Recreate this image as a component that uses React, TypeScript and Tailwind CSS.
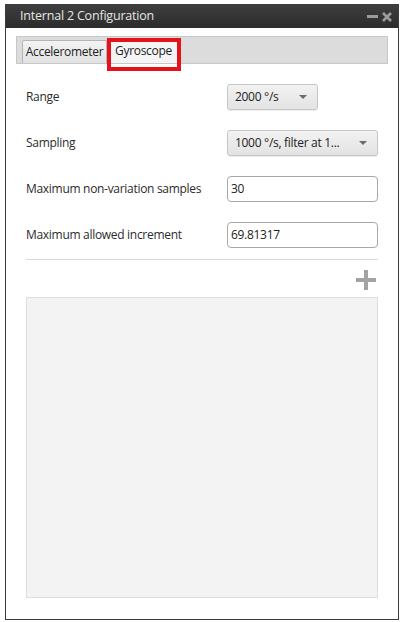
import React from "react";

const font = { fontFamily: '"Segoe UI", "Open Sans", "Noto Sans", sans-serif' };

function Dropdown({ text, width }: { text: string; width: string }) {
  return (
    <div
      className={`${width} h-[26px] flex items-center justify-between pl-[7px] pr-[10px] rounded-[3px] border border-[#c6c6c6] bg-gradient-to-b from-[#f2f2f2] to-[#e3e3e3] text-[12px] tracking-[-0.3px] text-[#222] shadow-[0_1px_1px_rgba(0,0,0,0.08)]`}
    >
      <span className="whitespace-nowrap">{text}</span>
      <svg width="8" height="5" viewBox="0 0 8 5">
        <path d="M0 0 L8 0 L4 4 Z" fill="#6b6b6b" />
      </svg>
    </div>
  );
}

function Input({ value }: { value: string }) {
  return (
    <div className="w-[151px] h-[26px] flex items-center pl-[3px] rounded-[4px] border border-[#a8a8a8] bg-white text-[12px] tracking-[-0.3px] text-[#222]">
      {value}
    </div>
  );
}

function Row({ label, children }: { label: string; children: React.ReactNode }) {
  return (
    <div className="flex items-center h-[26px]">
      <div className="w-[201px] text-[12px] tracking-[-0.3px] text-[#2b2b2b] whitespace-nowrap">{label}</div>
      {children}
    </div>
  );
}

export default function App() {
  return (
    <div className="w-[403px] h-[622px] bg-white pt-[4px] pl-[5px]" style={font}>
      <div className="w-[394px] h-[616px] border border-[#3a3a3a] flex flex-col bg-white">
        <div className="h-[23px] shrink-0 bg-gradient-to-b from-[#3e3e3e] to-[#2c2c2c] flex items-center justify-between pl-[14px] pr-[6px]">
          <span className="text-[12.5px] tracking-[-0.2px] text-[#e6e6e6]">Internal 2 Configuration</span>
          <div className="flex items-center gap-[4px]">
            <svg width="11" height="11" viewBox="0 0 11 11">
              <rect x="0" y="4" width="11" height="3" fill="#9c9c9c" />
            </svg>
            <svg width="10" height="10" viewBox="0 0 10 10">
              <path d="M1 1 L9 9 M9 1 L1 9" stroke="#9c9c9c" strokeWidth="2.6" />
            </svg>
          </div>
        </div>
        <div className="flex-1 flex flex-col px-[10px] pt-[8px] pb-[21px]">
          <div className="relative h-[28px] shrink-0 bg-[#dcdcdc] border border-[#c8c8c8] flex items-end pl-[5px]">
            <div className="h-[23px] w-[85px] flex items-center justify-center border border-b-0 border-[#b4b4b4] rounded-t-[2px] bg-gradient-to-b from-[#f3f3f3] to-[#e2e2e2] text-[12px] tracking-[-0.3px] text-[#222]">
              Accelerometer
            </div>
            <div className="h-[24px] w-[73px] flex items-center justify-center bg-[#f4f4f4] text-[12px] tracking-[-0.3px] text-[#222]">
              Gyroscope
            </div>
            <div className="absolute left-[90px] top-[1px] w-[74px] h-[33px] border-[4px] border-[#e5121b] pointer-events-none" />
          </div>
          <div className="flex flex-col gap-[20px] mt-[20px] px-[10px]">
            <Row label="Range">
              <Dropdown text="2000 °/s" width="w-[91px]" />
            </Row>
            <Row label="Sampling">
              <Dropdown text="1000 °/s, filter at 1..." width="w-[151px]" />
            </Row>
            <Row label="Maximum non-variation samples">
              <Input value="30" />
            </Row>
            <Row label="Maximum allowed increment">
              <Input value="69.81317" />
            </Row>
          </div>
          <div className="mx-[10px] mt-[11px] h-px bg-[#d9d9d9]" />
          <div className="mx-[10px] flex justify-end pr-[2px] mt-[10px]">
            <svg width="20" height="20" viewBox="0 0 20 20">
              <rect x="8" y="0" width="4" height="20" fill="#a3a3a3" />
              <rect x="0" y="8" width="20" height="4" fill="#a3a3a3" />
            </svg>
          </div>
          <div className="mx-[10px] mt-[7px] flex-1 bg-[#f3f3f3] border border-[#dedede]" />
        </div>
      </div>
    </div>
  );
}
